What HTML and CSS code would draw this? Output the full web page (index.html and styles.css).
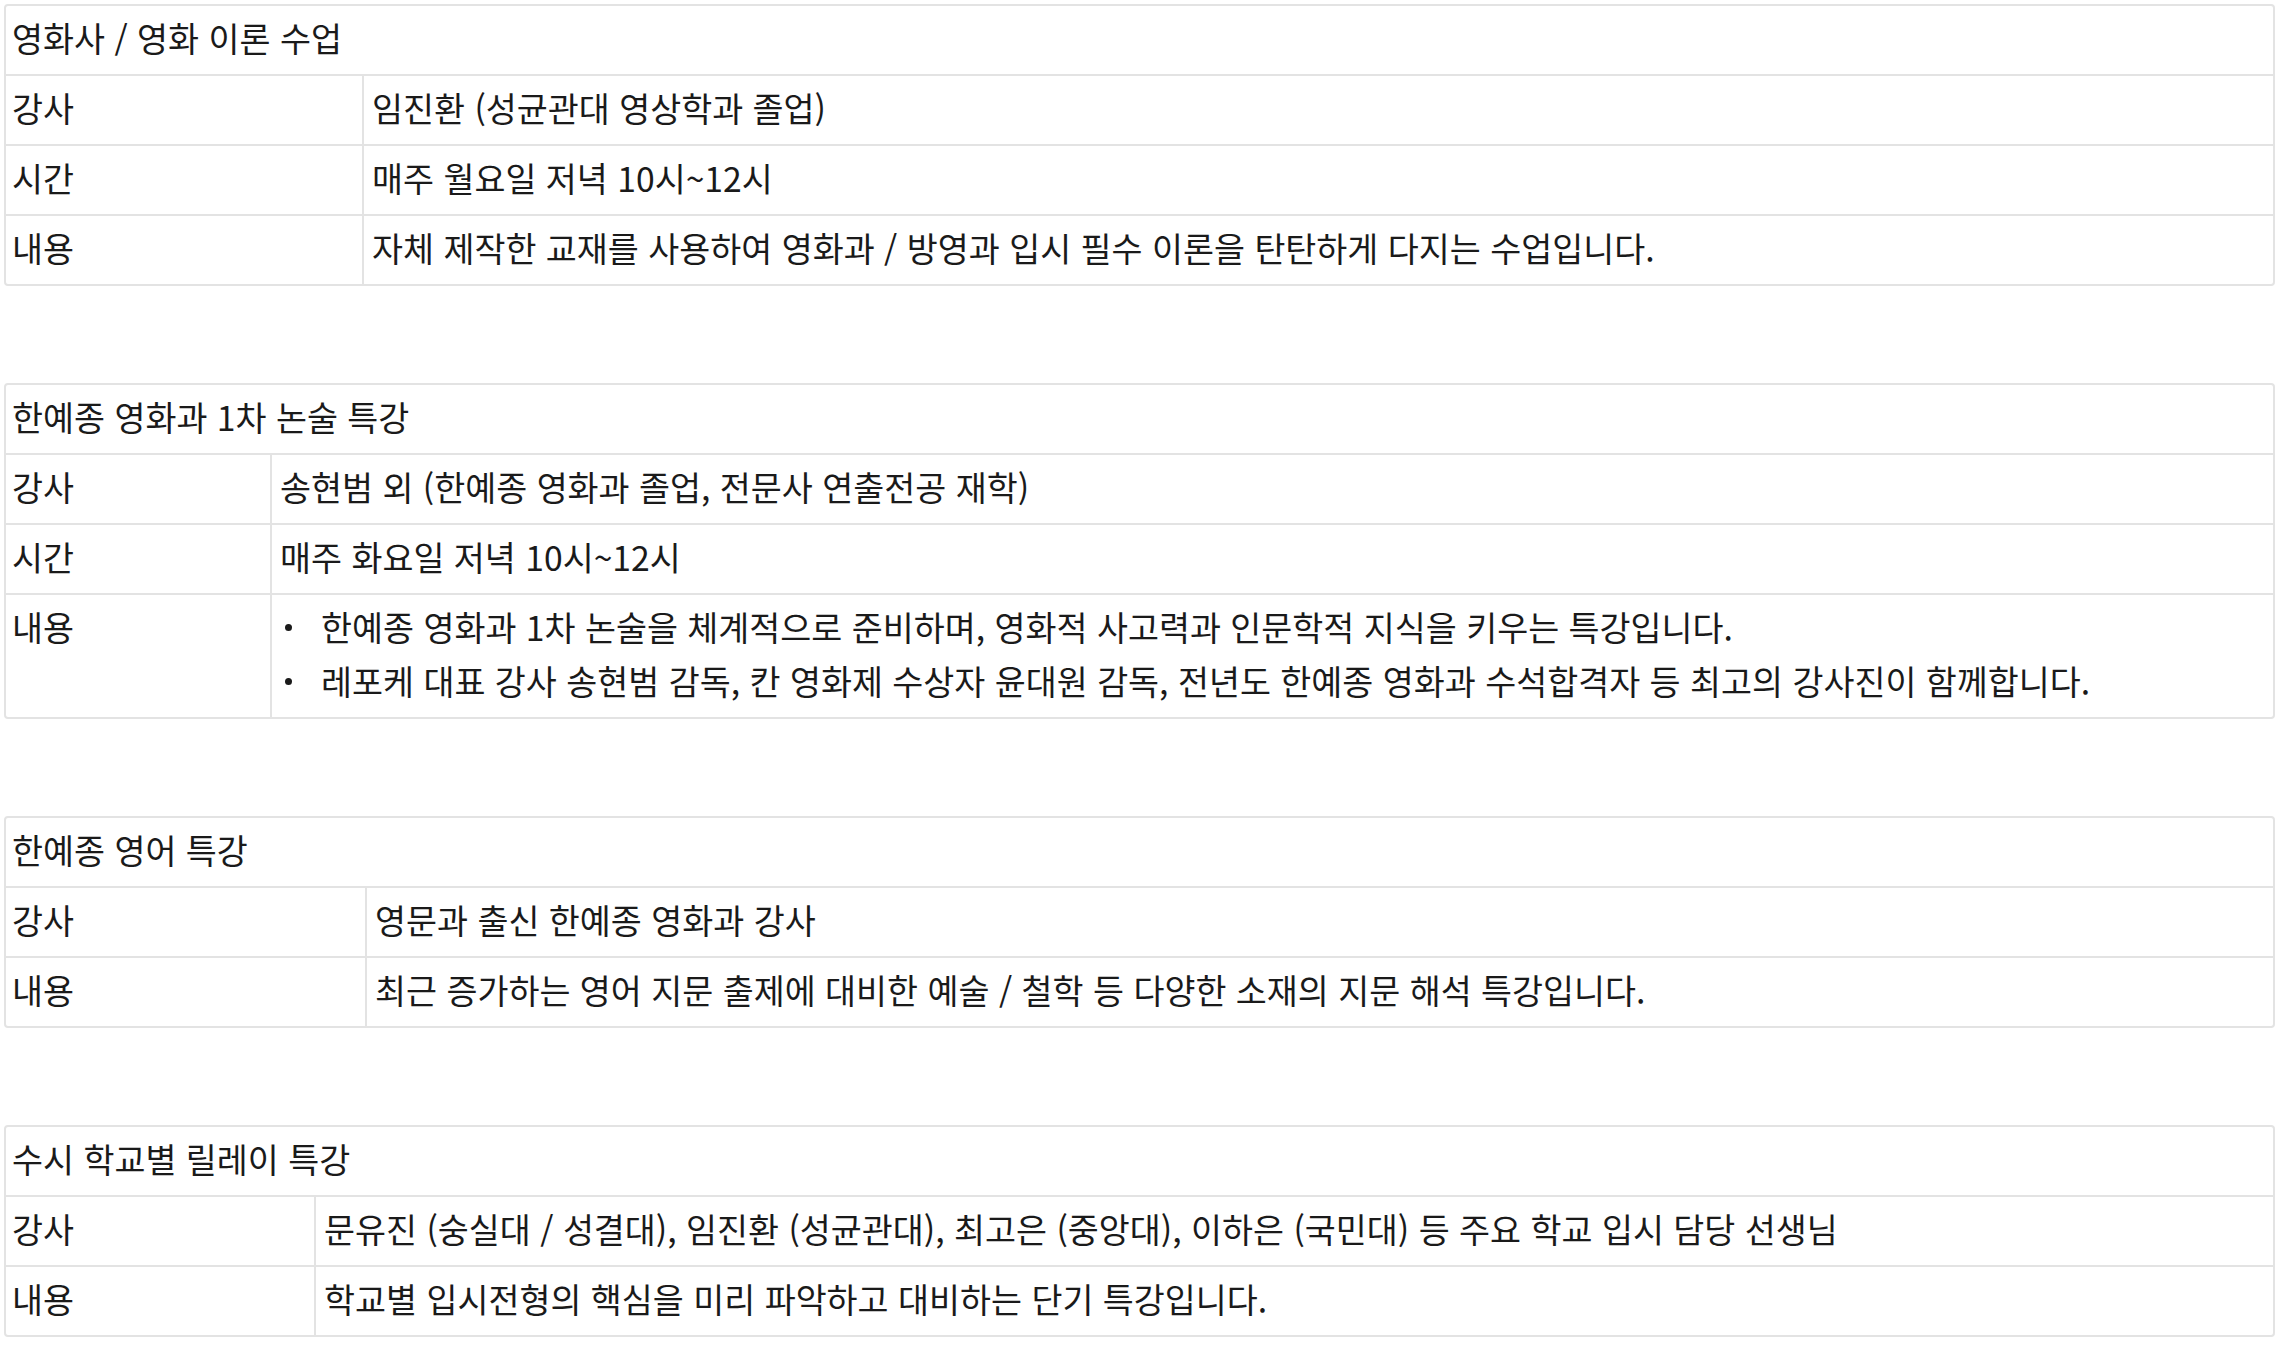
FILE: index.html
```html
<!DOCTYPE html>
<html lang="ko">
<head>
<meta charset="utf-8">
<title>강의 안내</title>
<link rel="stylesheet" href="styles.css">
</head>
<body>
<main class="page">
  <section class="course course--theory">
    <h2 class="course__title">영화사 / 영화 이론 수업</h2>
    <div class="course__row"><div class="course__label">강사</div><div class="course__value">임진환 (성균관대 영상학과 졸업)</div></div>
    <div class="course__row"><div class="course__label">시간</div><div class="course__value">매주 월요일 저녁 10시~12시</div></div>
    <div class="course__row"><div class="course__label">내용</div><div class="course__value">자체 제작한 교재를 사용하여 영화과 / 방영과 입시 필수 이론을 탄탄하게 다지는 수업입니다.</div></div>
  </section>

  <section class="course course--essay">
    <h2 class="course__title">한예종 영화과 1차 논술 특강</h2>
    <div class="course__row"><div class="course__label">강사</div><div class="course__value">송현범 외 (한예종 영화과 졸업, 전문사 연출전공 재학)</div></div>
    <div class="course__row"><div class="course__label">시간</div><div class="course__value">매주 화요일 저녁 10시~12시</div></div>
    <div class="course__row"><div class="course__label">내용</div><div class="course__value">
      <ul class="bullets">
        <li>한예종 영화과 1차 논술을 체계적으로 준비하며, 영화적 사고력과 인문학적 지식을 키우는 특강입니다.</li>
        <li>레포케 대표 강사 송현범 감독, 칸 영화제 수상자 윤대원 감독, 전년도 한예종 영화과 수석합격자 등 최고의 강사진이 함께합니다.</li>
      </ul>
    </div></div>
  </section>

  <section class="course course--english">
    <h2 class="course__title">한예종 영어 특강</h2>
    <div class="course__row"><div class="course__label">강사</div><div class="course__value">영문과 출신 한예종 영화과 강사</div></div>
    <div class="course__row"><div class="course__label">내용</div><div class="course__value">최근 증가하는 영어 지문 출제에 대비한 예술 / 철학 등 다양한 소재의 지문 해석 특강입니다.</div></div>
  </section>

  <section class="course course--relay">
    <h2 class="course__title">수시 학교별 릴레이 특강</h2>
    <div class="course__row"><div class="course__label">강사</div><div class="course__value">문유진 (숭실대 / 성결대), 임진환 (성균관대), 최고은 (중앙대), 이하은 (국민대) 등 주요 학교 입시 담당 선생님</div></div>
    <div class="course__row"><div class="course__label">내용</div><div class="course__value">학교별 입시전형의 핵심을 미리 파악하고 대비하는 단기 특강입니다.</div></div>
  </section>
</main>
</body>
</html>
```

FILE: styles.css
```css
* { box-sizing: border-box; }

html, body {
  margin: 0;
  padding: 0;
  background: #ffffff;
}

body {
  font-family: "Noto Sans CJK KR", "Noto Sans", sans-serif;
  font-size: 33.7px;
  line-height: 54px;
  color: #1a1a1a;
}

.page {
  padding: 4px 5px 4px 4px;
}

.course {
  border: 2px solid #e3e3e3;
  border-radius: 4px;
  margin: 0 0 97px 0;
  --label: 356px;
}

.course:last-child { margin-bottom: 0; }

.course--theory { --label: 356px; }
.course--essay { --label: 264px; }
.course--english { --label: 359px; }
.course--relay { --label: 308px; }

.course__title {
  margin: 0;
  font-size: 33.7px;
  font-weight: 400;
  line-height: 54px;
  padding: 5px 6px 9px;
}

.course__row {
  display: grid;
  grid-template-columns: var(--label) 1fr;
  border-top: 2px solid #e3e3e3;
}

.course__label {
  padding: 5px 6px 9px;
}

.course__value {
  padding: 5px 8px 9px;
  border-left: 2px solid #e3e3e3;
}

.bullets {
  list-style: none;
  margin: 0;
  padding: 0;
}

.bullets li {
  display: flex;
  align-items: center;
}

.bullets li::before {
  content: "";
  flex: none;
  width: 7px;
  height: 7px;
  border-radius: 50%;
  background: #1a1a1a;
  margin: 0 29px 0 5px;
}
```
